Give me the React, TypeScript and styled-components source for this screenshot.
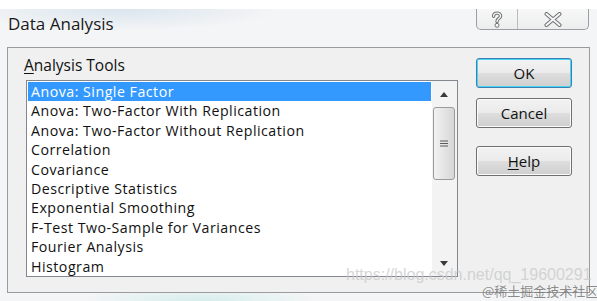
import React from 'react'
import styled, { createGlobalStyle } from 'styled-components'

const GlobalStyle = createGlobalStyle`
  html, body {
    margin: 0;
    padding: 0;
    background: #ffffff;
  }
  * {
    box-sizing: border-box;
  }
`

const tools = [
  'Anova: Single Factor',
  'Anova: Two-Factor With Replication',
  'Anova: Two-Factor Without Replication',
  'Correlation',
  'Covariance',
  'Descriptive Statistics',
  'Exponential Smoothing',
  'F-Test Two-Sample for Variances',
  'Fourier Analysis',
  'Histogram',
]

const Window = styled.div`
  position: relative;
  width: 597px;
  height: 301px;
  padding-top: 9px;
  background: #ffffff;
  font-family: "Open Sans", "Noto Sans", sans-serif;
  color: #111;
  overflow: hidden;
`

const Frame = styled.div`
  height: 292px;
  display: flex;
  flex-direction: column;
  background:
    radial-gradient(ellipse 160px 22px at 120px 0px, rgba(170, 200, 225, 0.35), rgba(255, 255, 255, 0) 100%),
    radial-gradient(ellipse 120px 14px at 200px 292px, rgba(175, 230, 225, 0.45), rgba(255, 255, 255, 0) 100%),
    #f4f5f6;
`

const TitleBar = styled.div`
  height: 38px;
  display: flex;
  align-items: flex-start;
  justify-content: space-between;
`

const Title = styled.div`
  padding: 3px 0 0 8px;
  font-size: 17px;
  color: #1a1a1a;
`

const CaptionGroup = styled.div`
  display: flex;
  margin-right: 8px;
  height: 21px;
  border: 1px solid #9a9fa6;
  border-top: 0;
  border-radius: 0 0 5px 5px;
  background: linear-gradient(#f7f7f7, #eceded);
  overflow: hidden;
`

const CaptionButton = styled.div<{ $w: number; $divider?: boolean }>`
  width: ${p => p.$w}px;
  display: flex;
  align-items: center;
  justify-content: center;
  border-right: ${p => (p.$divider ? '1px solid #b9bcc1' : '0')};
`

const Panel = styled.div`
  margin: 0 7px;
  height: 246px;
  display: flex;
  border: 1px solid #9b9b9b;
  background: #f0f0f0;
`

const LeftCol = styled.div`
  width: 450px;
  padding: 6px 0 0 16px;
  display: flex;
  flex-direction: column;
`

const GroupLabel = styled.div`
  font-size: 15.5px;
  height: 26px;
`

const U = styled.span`
  text-decoration: underline;
  text-underline-offset: 2px;
`

const ListBox = styled.div`
  width: 432px;
  height: 197px;
  margin-left: 2px;
  display: flex;
  border: 1px solid #828790;
  background: #ffffff;
`

const Rows = styled.div`
  flex: 1;
  padding: 1px;
  overflow: hidden;
`

const Row = styled.div<{ $selected?: boolean }>`
  height: 19.4px;
  line-height: 19.4px;
  padding-left: 3px;
  font-size: 14.2px;
  letter-spacing: 0.5px;
  white-space: nowrap;
  color: ${p => (p.$selected ? '#ffffff' : '#111111')};
  background: ${p => (p.$selected ? '#3399ff' : 'transparent')};
`

const ScrollBar = styled.div`
  width: 25px;
  display: flex;
  flex-direction: column;
  align-items: center;
  background: #f3f3f3;
  padding: 0 2px 0 1px;
`

const ArrowCell = styled.div`
  height: 26px;
  width: 100%;
  display: flex;
  align-items: center;
  justify-content: center;
`

const Thumb = styled.div`
  width: 100%;
  height: 73px;
  border: 1px solid #9a9a9a;
  border-radius: 3px;
  background: linear-gradient(90deg, #f2f2f2, #e3e3e3 55%, #d6d6d6);
  display: flex;
  align-items: center;
  justify-content: center;
`

const Track = styled.div`
  flex: 1;
`

const RightCol = styled.div`
  padding: 10px 0 0 18px;
  display: flex;
  flex-direction: column;
`

const Button = styled.div<{ $default?: boolean; $gap: number }>`
  width: 96px;
  height: 30px;
  margin-bottom: ${p => p.$gap}px;
  display: flex;
  align-items: center;
  justify-content: center;
  font-size: 15px;
  color: #111;
  border: 1px solid ${p => (p.$default ? '#3c7fb1' : '#707070')};
  border-radius: 3px;
  background: linear-gradient(#f2f2f2 0%, #ebebeb 48%, #dddddd 52%, #cfcfcf 100%);
  box-shadow: ${p => (p.$default ? 'inset 0 0 0 1px #48d4f3' : 'inset 0 0 0 1px #fbfbfb')};
`

const Watermark = styled.div`
  position: absolute;
  left: 346px;
  top: 266px;
  font-family: "Liberation Sans", Arial, sans-serif;
  font-size: 16px;
  color: rgba(200, 200, 200, 0.75);
  white-space: nowrap;
`

const JuejinMark = styled.div`
  position: absolute;
  left: 482px;
  top: 281px;
  font-family: "Noto Sans CJK SC", sans-serif;
  font-size: 13px;
  color: rgba(120, 120, 120, 0.85);
  white-space: nowrap;
`

const HelpGlyph = () => (
  <svg width="12" height="17" viewBox="0 0 12 17">
    <path d="M2.6 5.2 C2.6 1.2 9.6 1.2 9.6 5 C9.6 7.6 6 7.4 6 10.4" fill="none" stroke="#6f7275" strokeWidth="3.4" strokeLinecap="round" />
    <path d="M2.6 5.2 C2.6 1.2 9.6 1.2 9.6 5 C9.6 7.6 6 7.4 6 10.4" fill="none" stroke="#f6f6f6" strokeWidth="1.4" strokeLinecap="round" />
    <circle cx="6" cy="14.3" r="2" fill="#f6f6f6" stroke="#6f7275" strokeWidth="1" />
  </svg>
)

const CloseGlyph = () => (
  <svg width="18" height="15" viewBox="0 0 18 15">
    <path d="M2.5 2 L15.5 13 M15.5 2 L2.5 13" stroke="#6f7275" strokeWidth="4" strokeLinecap="round" />
    <path d="M2.5 2 L15.5 13 M15.5 2 L2.5 13" stroke="#f6f6f6" strokeWidth="2" strokeLinecap="round" />
  </svg>
)

const UpArrow = () => (
  <svg width="8" height="5" viewBox="0 0 8 5">
    <path d="M0 5 L4 0 L8 5 Z" fill="#3a3a3a" />
  </svg>
)

const DownArrow = () => (
  <svg width="8" height="5" viewBox="0 0 8 5">
    <path d="M0 0 L8 0 L4 5 Z" fill="#3a3a3a" />
  </svg>
)

const Grip = () => (
  <svg width="8" height="8" viewBox="0 0 8 8">
    <path d="M0 1 H8 M0 3.5 H8 M0 6 H8" stroke="#5a5a5a" strokeWidth="1" />
  </svg>
)

const App = () => {
  return (
    <>
      <GlobalStyle />
      <Window>
        <Frame>
          <TitleBar>
            <Title>Data Analysis</Title>
            <CaptionGroup>
              <CaptionButton $w={41} $divider>
                <HelpGlyph />
              </CaptionButton>
              <CaptionButton $w={70}>
                <CloseGlyph />
              </CaptionButton>
            </CaptionGroup>
          </TitleBar>

          <Panel>
            <LeftCol>
              <GroupLabel>
                <U>A</U>nalysis Tools
              </GroupLabel>
              <ListBox>
                <Rows>
                  {tools.map((t, i) => (
                    <Row key={t} $selected={i === 0}>{t}</Row>
                  ))}
                </Rows>
                <ScrollBar>
                  <ArrowCell>
                    <UpArrow />
                  </ArrowCell>
                  <Thumb>
                    <Grip />
                  </Thumb>
                  <Track />
                  <ArrowCell>
                    <DownArrow />
                  </ArrowCell>
                </ScrollBar>
              </ListBox>
            </LeftCol>

            <RightCol>
              <Button $default $gap={10}>OK</Button>
              <Button $gap={18}>Cancel</Button>
              <Button $gap={0}>
                <U>H</U>elp
              </Button>
            </RightCol>
          </Panel>
        </Frame>

        <Watermark>https://blog.csdn.net/qq_19600291</Watermark>
        <JuejinMark>@稀土掘金技术社区</JuejinMark>
      </Window>
    </>
  )
}

export default App
